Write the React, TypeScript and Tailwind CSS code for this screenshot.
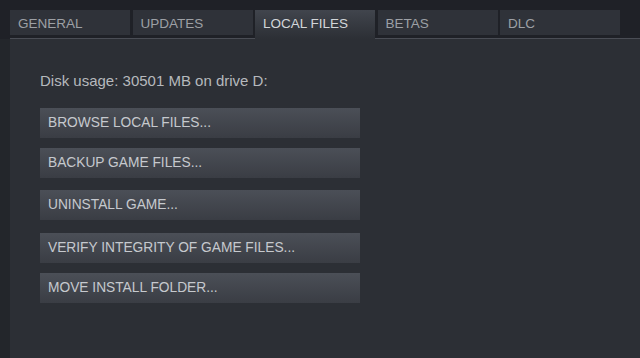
import type { ReactNode } from 'react'

const tabs = ['GENERAL', 'UPDATES', 'LOCAL FILES', 'BETAS', 'DLC']
const active = 'LOCAL FILES'

const actions = [
  { label: 'BROWSE LOCAL FILES...', gap: 'mt-0' },
  { label: 'BACKUP GAME FILES...', gap: 'mt-[10px]' },
  { label: 'UNINSTALL GAME...', gap: 'mt-[12px]' },
  { label: 'VERIFY INTEGRITY OF GAME FILES...', gap: 'mt-[13px]' },
  { label: 'MOVE INSTALL FOLDER...', gap: 'mt-[10px]' },
]

function Tab({ label }: { label: string }) {
  const isActive = label === active
  return (
    <div
      className={
        isActive
          ? 'relative z-10 w-[120px] h-[29px] -mb-[1px] pl-[8px] pt-[6px] bg-gradient-to-b from-[#41454d] to-[#2c2f35] text-[#d3d6d9]'
          : 'w-[120px] h-[25px] pl-[8px] pt-[6px] bg-[#2f3239] text-[#9da0a5]'
      }
    >
      {label}
    </div>
  )
}

function ActionButton({ children, className }: { children: ReactNode; className: string }) {
  return (
    <button
      className={`${className} w-[320px] h-[30px] pl-[8px] text-left text-[13.75px] text-[#c6c9ce] bg-gradient-to-b from-[#4b4f57] to-[#3a3d44]`}
    >
      {children}
    </button>
  )
}

export default function App() {
  return (
    <div
      className="w-[640px] h-[358px] overflow-hidden bg-[#1f2127] flex flex-col"
      style={{ fontFamily: '"Liberation Sans", Arial, sans-serif' }}
    >
      {/* Tab strip */}
      <div className="pt-[10px] pl-[10px]">
        <div className="h-[28px] flex items-start gap-[2.5px] text-[13.5px] leading-[15px]">
          {tabs.map(t => <Tab key={t} label={t} />)}
        </div>
        <div className="h-[1px] bg-[#4a4d55]" />
      </div>

      {/* Body */}
      <div className="flex flex-1">
        <div className="w-[10px] bg-[#23262b]" />
        <div className="flex-1 bg-[#2c2f35] pt-[33px] pl-[30px]">
          <div className="text-[15px] leading-[17px] text-[#b6b9bd]">Disk usage: 30501 MB on drive D:</div>
          <div className="mt-[19px] flex flex-col">
            {actions.map(a => (
              <ActionButton key={a.label} className={a.gap}>{a.label}</ActionButton>
            ))}
          </div>
        </div>
      </div>
    </div>
  )
}
